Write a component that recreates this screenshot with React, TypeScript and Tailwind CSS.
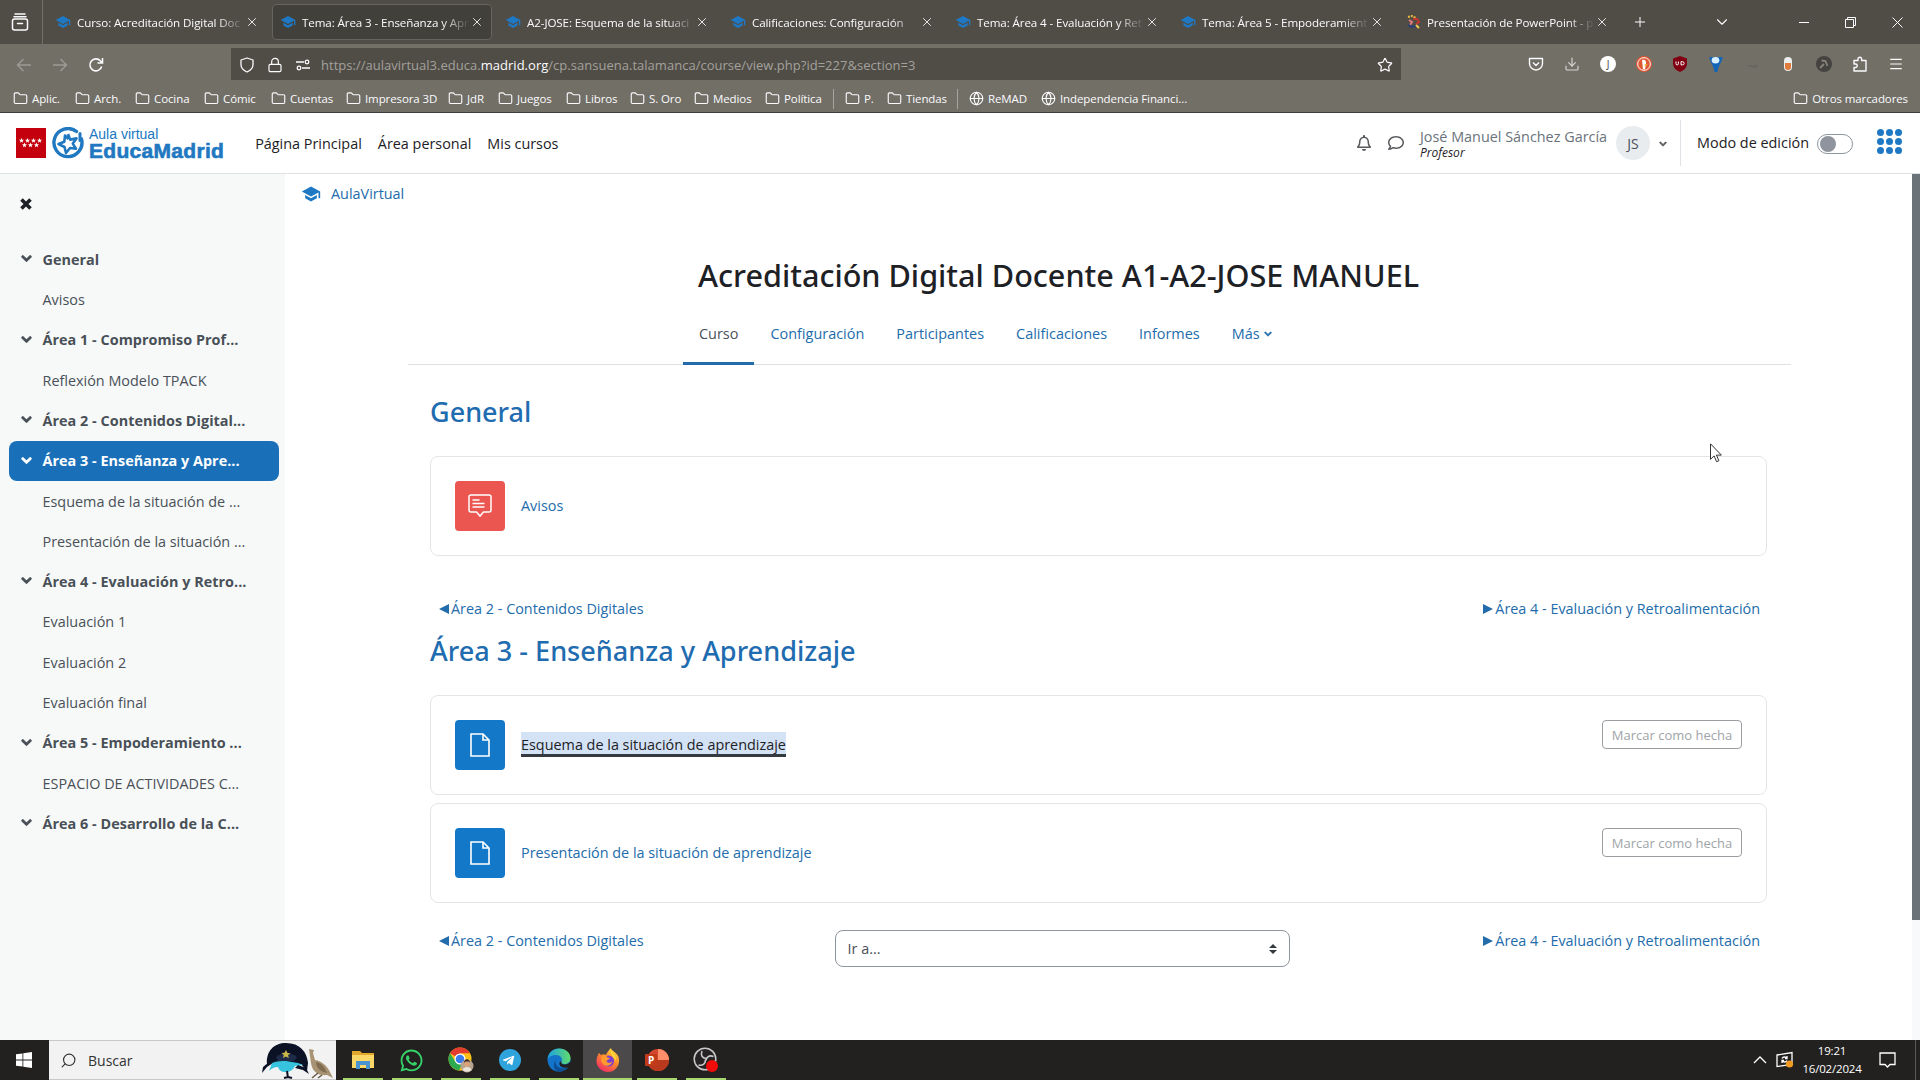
import { useState } from "react";
import { FaChevronDown, FaRegBell, FaRegComment, FaWhatsapp, FaTelegramPlane } from "react-icons/fa";
import { MdSchool } from "react-icons/md";
import { ChevronDown, Download, Folder, Globe, Lock, Menu, Plus, Search, Star, X } from "lucide-react";

const tabs = [
    { title: "Curso: Acreditación Digital Doc" },
    { title: "Tema: Área 3 - Enseñanza y Apr", active: true },
    { title: "A2-JOSE: Esquema de la situaci" },
    { title: "Calificaciones: Configuración" },
    { title: "Tema: Área 4 - Evaluación y Ret" },
    { title: "Tema: Área 5 - Empoderamient" },
    { title: "Presentación de PowerPoint - p", moodle: false },
];

const bookmarks: any[] = [
    { name: "Aplic.", width: "w-[62px]" },
    { name: "Arch.", width: "w-[60px]" },
    { name: "Cocina", width: "w-[69px]" },
    { name: "Cómic", width: "w-[67px]" },
    { name: "Cuentas", width: "w-[75px]" },
    { name: "Impresora 3D", width: "w-[102px]" },
    { name: "JdR", width: "w-[50px]" },
    { name: "Juegos", width: "w-[68px]" },
    { name: "Libros", width: "w-[64px]" },
    { name: "S. Oro", width: "w-[64px]" },
    { name: "Medios", width: "w-[71px]" },
    { name: "Política", width: "w-[68px]" },
    { name: "P.", width: "w-[42px]", divider: true },
    { name: "Tiendas", width: "w-[70px]" },
    { name: "ReMAD", width: "w-[72px]", divider: true, site: true },
    { name: "Independencia Financi...", width: "w-[160px]", site: true },
];

const courseIndex = [
    { name: "General", section: true },
    { name: "Avisos" },
    { name: "Área 1 - Compromiso Prof...", section: true },
    { name: "Reflexión Modelo TPACK" },
    { name: "Área 2 - Contenidos Digital...", section: true },
    { name: "Área 3 - Enseñanza y Apre...", section: true },
    { name: "Esquema de la situación de ..." },
    { name: "Presentación de la situación ..." },
    { name: "Área 4 - Evaluación y Retro...", section: true },
    { name: "Evaluación 1" },
    { name: "Evaluación 2" },
    { name: "Evaluación final" },
    { name: "Área 5 - Empoderamiento ...", section: true },
    { name: "ESPACIO DE ACTIVIDADES C..." },
    { name: "Área 6 - Desarrollo de la C...", section: true },
];

const courseTabs = ["Curso", "Configuración", "Participantes", "Calificaciones", "Informes"];

function TabBar() {
    return (
        <div className="flex h-11 shrink-0 items-center bg-[#504d47] text-[#fbfbfe]">
            <div className="flex h-full w-[43px] items-center justify-center border-r border-[#726f67] pr-0.5">
                <svg width="18" height="18" viewBox="0 0 18 18" fill="none" stroke="currentColor" strokeWidth="1.5">
                    <path d="M4 1h10M3 3.8h12" strokeLinecap="round" />
                    <rect x="1.5" y="6" width="15" height="11" rx="2" />
                    <path d="M6.5 10.5h5" strokeLinecap="round" />
                </svg>
            </div>
            <div className="ml-1 flex gap-[5px]">
                {tabs.map((tab, index) => (
                    <div
                        key={index}
                        className={
                            "flex h-9 w-[220px] items-center rounded border pl-[7px] " +
                            (tab.active ? "border-[#67645d] bg-[#42403a]" : "border-transparent")
                        }
                    >
                        {tab.moodle === false ? <PowerPointFavicon /> : <MdSchool className="size-4 shrink-0 text-[#1f78c4]" />}
                        <span className="ml-1.5 w-[168px] whitespace-nowrap pt-px text-[11.6px] tracking-[-0.1px] [mask-image:linear-gradient(to_right,black_140px,transparent_168px)]">
                            {tab.title}
                        </span>
                        <X className="size-3.5 shrink-0" strokeWidth={1.5} />
                    </div>
                ))}
            </div>
            <Plus className="ml-[15px] size-4" strokeWidth={1.5} />
            <ChevronDown className="ml-[65px] size-[18px]" strokeWidth={1.5} />
            <div className="ml-auto flex items-center gap-9 pr-[17px]">
                <svg width="10" height="10" stroke="currentColor"><path d="M0 5.5h10" /></svg>
                <svg width="11" height="11" fill="none" stroke="currentColor">
                    <path d="M.5 2.5h8v8h-8zM2.5 2.5v-2h8v8h-2" />
                </svg>
                <svg width="11" height="11" stroke="currentColor"><path d="M.5.5l10 10M10.5.5l-10 10" /></svg>
            </div>
        </div>
    );
}

function PowerPointFavicon() {
    return (
        <svg width="16" height="16" viewBox="0 0 16 16" fill="none" strokeWidth="2" className="shrink-0">
            <path d="M3 3l4-1 4 2" stroke="#e8b93b" strokeDasharray="2 1" />
            <path d="M8 5l4 0 2 3-3 2" stroke="#c4372e" />
            <path d="M4 6l3 2-2 3" stroke="#e37a7a" />
            <path d="M3 11l4 2 4-1" stroke="#2c3f78" />
            <path d="M11 11l3 3" stroke="#efc951" />
        </svg>
    );
}

function Toolbar() {
    return (
        <div className="flex h-10 shrink-0 items-center bg-[#726f67] text-[#fbfbfe]">
            <div className="flex w-[231px] gap-5 pl-4 pt-0.5">
                <svg width="16" height="16" viewBox="0 0 16 16" fill="none" stroke="#9d9b95" strokeWidth="1.4">
                    <path d="M15 8H1.5M7.5 2l-6 6 6 6" />
                </svg>
                <svg width="16" height="16" viewBox="0 0 16 16" fill="none" stroke="#9d9b95" strokeWidth="1.4">
                    <path d="M1 8h13.500M8.500 2l6 6-6 6" />
                </svg>
                <svg width="16" height="16" viewBox="0 0 16 16" fill="none" stroke="currentColor" strokeWidth="1.6">
                    <path d="M13.700 9.500A6 6 0 1 1 12.500 4L14 5.500M14.500 1v5h-5" />
                </svg>
            </div>
            <div className="flex h-8 w-[1170px] items-center bg-[#504d47] pl-2 pr-2 pt-0.5">
                <svg width="16" height="16" viewBox="0 0 16 16" fill="none" stroke="currentColor" strokeWidth="1.3">
                    <path d="M8 1L2 3v4.500c0 3.500 2.500 6 6 7.500 3.500-1.500 6-4 6-7.500V3z" strokeLinejoin="round" />
                </svg>
                <Lock className="ml-3 size-4" strokeWidth={1.8} />
                <svg className="ml-3" width="16" height="16" viewBox="0 0 16 16" fill="none" stroke="currentColor" strokeWidth="1.3">
                    <path d="M1 5h8M7 11h8" />
                    <circle cx="12" cy="5" r="1.800" />
                    <circle cx="4" cy="11" r="1.800" />
                </svg>
                <span className="ml-2.5 pt-px text-[13px] tracking-[0.02px] text-[#a3a19c]">
                    https://aulavirtual3.educa.<span className="text-[#fbfbfe]">madrid.org</span>
                    /cp.sansuena.talamanca/course/view.php?id=227&section=3
                </span>
                <Star className="ml-auto size-4" strokeWidth={1.8} />
            </div>
            <div className="ml-auto flex items-center gap-5 pr-4">
                <svg width="16" height="16" viewBox="0 0 16 16" fill="none" stroke="currentColor" strokeWidth="1.400">
                    <path d="M1.500 2.500h13v5a6.500 6.500 0 0 1-13 0zM5 6.500l3 3 3-3" strokeLinejoin="round" />
                </svg>
                <Download className="size-4 text-[#d4d3d0]" strokeWidth={1.8} />
                <div className="flex size-4 items-center justify-center rounded-full bg-white text-[10px] text-[#444]">J</div>
                <svg width="16" height="16" viewBox="0 0 16 16">
                    <circle cx="8" cy="8" r="8" fill="#de5833" />
                    <circle cx="8" cy="8" r="6.300" fill="none" stroke="#fff" />
                    <path d="M6 4c3-1 4.500 1 4 4l-1 5.500-2-.5z" fill="#fff" />
                    <path d="M8.500 8h3l-1 1.500h-2z" fill="#f5b82e" />
                </svg>
                <svg width="16" height="16" viewBox="0 0 16 16">
                    <path d="M8 0l7 2.500v5c0 4-3 7-7 8.500-4-1.500-7-4.500-7-8.500v-5z" fill="#800012" />
                    <path d="M4 5.500v2.200a1.200 1.200 0 0 0 2.400 0V5.500M9 5.700h1.500a1.600 1.600 0 0 1 0 3.200H9z" fill="none" stroke="#fff" />
                </svg>
                <svg width="16" height="16" viewBox="0 0 16 16">
                    <path d="M1.500 1h13c0 5-4.500 8-5 15h-3C6 9 1.500 6 1.500 1z" fill="#1266b8" />
                    <ellipse cx="7.500" cy="4.200" rx="3.800" ry="3.200" fill="#d8efff" />
                </svg>
                <svg width="16" height="16" viewBox="0 0 16 16"><path d="M2 9h4l3 1 5-2-2 4-6-1z" fill="#67655f" /></svg>
                <svg width="16" height="16" viewBox="0 0 16 16">
                    <rect x="4" y="1" width="8" height="14" rx="4" fill="#eee" />
                    <path d="M5 7h6v4a3 3 0 0 1-6 0z" fill="#e07b39" />
                </svg>
                <svg width="16" height="16" viewBox="0 0 16 16">
                    <circle cx="8" cy="8" r="8" fill="#45433f" />
                    <path d="M4 12l4-4M5.500 4.500l4 .5 2 5" fill="none" stroke="#85827b" strokeWidth="1.800" />
                </svg>
                <svg width="16" height="16" viewBox="0 0 16 16" fill="none" stroke="currentColor" strokeWidth="1.400">
                    <path d="M2 4.500h4V3a1.800 1.800 0 0 1 3.600 0v1.500H14V15H2v-3.500h1.500a1.700 1.700 0 0 0 0-3.500H2z" strokeLinejoin="round" />
                </svg>
                <Menu className="size-4" strokeWidth={1.8} />
            </div>
        </div>
    );
}

function BookmarkBar() {
    return (
        <div className="flex h-[29px] shrink-0 items-center border-b border-[#3f3d39] bg-[#726f67] pl-[13px] pt-px text-[11.5px] tracking-[-0.1px] text-[#fbfbfe]">
            {bookmarks.map((b, index) => (
                <div key={index} className="flex items-center">
                    {b.divider && <div className="mr-[11px] h-5 w-px bg-[#a6a49f]" />}
                    <div className={"flex shrink-0 items-center gap-1 whitespace-nowrap " + b.width}>
                        {b.site
                            ? <Globe className="size-[15px] shrink-0" strokeWidth={1.8} />
                            : <Folder className="size-[15px] shrink-0" strokeWidth={1.8} />}
                        {b.name}
                    </div>
                </div>
            ))}
            <div className="ml-auto flex items-center gap-1 pr-3">
                <Folder className="size-[15px]" strokeWidth={1.8} />
                Otros marcadores
            </div>
        </div>
    );
}

function Logo() {
    return (
        <div className="flex items-center">
            <svg width="30" height="30" viewBox="0 0 30 30" fill="#fff">
                <rect width="30" height="30" fill="#c4000f" />
                {[5.500, 11.500, 17.500, 23.500].map((x) => (
                    <path key={x} transform={`translate(${x} 12.500)`} d="M0-2.500l.7 1.700h1.800L1.100.4l.5 1.900L0 1.200l-1.600 1.100.5-1.900-1.400-1.200h1.800z" />
                ))}
                {[8.500, 14.500, 20.500].map((x) => (
                    <path key={x} transform={`translate(${x} 17)`} d="M0-2.500l.7 1.700h1.800L1.100.4l.5 1.900L0 1.200l-1.600 1.100.5-1.900-1.400-1.200h1.800z" />
                ))}
            </svg>
            <svg className="ml-1.5" width="32" height="32" viewBox="0 0 32 32" fill="none" stroke="#2078c1">
                <path d="M24.500 4.500A14 14 0 1 0 29.500 12" strokeWidth="3.400" strokeLinecap="round" />
                <path d="M16 7l2.200 5.600 6.300-1.200-3.700 5.200 3.200 5-6-.6L14 26l-1.500-6L6.500 17l5.800-2.300L13 8.500l3.500 3.500" strokeWidth="2.600" strokeLinejoin="round" />
                <path d="M28 6.500v7" strokeWidth="3" strokeLinecap="round" />
            </svg>
            <div className="ml-[5px] flex flex-col font-[Liberation_Sans,Arial,sans-serif] text-[#2078c1]">
                <span className="text-[14px] leading-[14px]">Aula virtual</span>
                <span className="text-[21px] font-bold leading-[19px] tracking-[0.3px] [-webkit-text-stroke:0.6px_#2078c1]">EducaMadrid</span>
            </div>
        </div>
    );
}

function SiteHeader() {
    const [editing, setEditing] = useState(false);

    return (
        <header className="flex h-[61px] shrink-0 items-center border-b border-[#dee2e6] bg-white pl-4 text-[14.4px] text-[#1d2125]">
            <Logo />
            <nav className="ml-[31px] flex gap-4 pt-0.5">
                <a>Página Principal</a>
                <a>Área personal</a>
                <a>Mis cursos</a>
            </nav>
            <div className="ml-auto flex items-center">
                <FaRegBell className="size-4 text-[#56595c]" />
                <FaRegComment className="ml-4 size-4 text-[#56595c]" />
                <div className="ml-4 flex flex-col pt-0.5">
                    <span className="leading-[18px] text-[#6a737b]">José Manuel Sánchez García</span>
                    <span className="text-xs italic leading-[14px]">Profesor</span>
                </div>
                <div className="ml-[9px] flex size-[34px] items-center justify-center rounded-full bg-[#e9ecef] pt-px text-sm text-[#495057]">JS</div>
                <FaChevronDown className="ml-[9px] mt-0.5 size-2 text-[#56595c] [stroke-width:50]" />
                <div className="ml-[13px] h-[46px] w-px bg-[#dee2e6]" />
                <span className="ml-4">Modo de edición</span>
                <button
                    onClick={() => setEditing(!editing)}
                    className={"ml-2 mt-px flex h-5 w-9 items-center rounded-full border border-[#8f959e] px-0.5 " + (editing ? "justify-end" : "")}
                >
                    <span className="size-4 rounded-full bg-[#8f959e]" />
                </button>
                <div className="ml-6 mr-[18px] mb-1 grid grid-cols-3 gap-[2px]">
                    {Array.from({ length: 9 }).map((_, i) => (
                        <span key={i} className="size-[7px] rounded-full bg-[#1f78c4]" />
                    ))}
                </div>
            </div>
        </header>
    );
}

function Sidebar() {
    const [current, setCurrent] = useState(5);

    return (
        <aside className="w-[285px] shrink-0 bg-[#f7f9f9] pt-5 text-[#495057]">
            <svg className="ml-5 mt-1" width="12" height="12" viewBox="0 0 12 12" stroke="#1d2125" strokeWidth="3.600">
                <path d="M1.500 1.500l9 9M10.500 1.500l-9 9" />
            </svg>
            <div className="ml-[9px] mt-[29.4px] w-[270px]">
                {courseIndex.map((item, index) => (
                    <div
                        key={index}
                        onClick={() => setCurrent(index)}
                        className={
                            "flex h-[40.3px] items-center whitespace-nowrap rounded-lg text-[14.4px] " +
                            (index === current ? "bg-[#1a70b8] text-white " : "") +
                            (item.section ? "font-bold tracking-[0.03px]" : "")
                        }
                    >
                        <span className="w-[33.5px] pl-3">
                            {item.section && <FaChevronDown className="mb-0.5 size-[11px] [stroke-width:50]" />}
                        </span>
                        {item.name}
                    </div>
                ))}
            </div>
        </aside>
    );
}

function SectionLinks({ children }: any) {
    return (
        <div className="flex items-start justify-between pl-[9px] pr-[7px] text-[14.4px] leading-[22px] text-[#226cab]">
            <a className="flex w-[300px] items-center gap-0.5">
                <svg width="10" height="10" fill="currentColor"><path d="M10 0v10L0 5z" /></svg>
                Área 2 - Contenidos Digitales
            </a>
            {children}
            <a className="flex w-[300px] items-center justify-end gap-0.5">
                <svg width="10" height="10" fill="currentColor"><path d="M0 0v10l10-5z" /></svg>
                Área 4 - Evaluación y Retroalimentación
            </a>
        </div>
    );
}

function ActivityCard({ name, forum, focused, completion }: any) {
    const [done, setDone] = useState(false);

    return (
        <div className="flex h-[100px] items-start rounded-lg border border-[#e3e6e9] px-6 pt-6 text-[14.4px]">
            <div className={"flex size-[50px] items-center justify-center rounded " + (forum ? "bg-[#eb5651]" : "bg-[#1478c8]")}>
                {forum ? (
                    <svg width="24" height="24" viewBox="0 0 24 24" fill="none" stroke="#fff" strokeWidth="1.500">
                        <path d="M3 1h18a2 2 0 0 1 2 2v13a2 2 0 0 1-2 2h-5.500L12 22l-3.500-4H3a2 2 0 0 1-2-2V3a2 2 0 0 1 2-2z" />
                        <path d="M4.500 6h7M4.500 9.500h12M4.500 13h12" />
                    </svg>
                ) : (
                    <svg width="20" height="24" viewBox="0 0 20 24" fill="none" stroke="#fff" strokeWidth="1.600">
                        <path d="M1 1h12l6 6v16H1zM13 1v6h6" />
                    </svg>
                )}
            </div>
            <div className="ml-4 flex h-[50px] items-center">
                {focused
                    ? <a className="mb-px h-[25px] bg-[#d3e3f5] leading-[25px] text-[#1d2125] shadow-[inset_0_-3px_0_#343a40]">{name}</a>
                    : <a className="text-[#226cab]">{name}</a>}
            </div>
            {completion && (
                <button
                    onClick={() => setDone(!done)}
                    className="ml-auto h-[29px] w-[140px] rounded border border-[#999da1] pt-0.5 text-[13px] text-[#a0a4a8]"
                >
                    Marcar como hecha
                </button>
            )}
        </div>
    );
}

function CoursePage() {
    return (
        <main className="flex-1 bg-white">
            <div className="flex h-10 items-center gap-2.5 pl-4 text-[14.4px] text-[#226cab]">
                <MdSchool className="size-5 text-[#1f78c4]" />
                AulaVirtual
            </div>
            <h1 className="ml-[413px] mt-[38px] font-[Noto_Sans,sans-serif] text-[30.6px] font-medium leading-[46px] text-[#1d2125]">
                Acreditación Digital Docente A1-A2-JOSE MANUEL
            </h1>
            <div className="ml-[123px] mt-[11px] flex h-[56px] w-[1383px] border-b border-[#dee2e6] pl-[275px] text-[14.45px] text-[#226cab]">
                {courseTabs.map((tab) => (
                    <a
                        key={tab}
                        className={
                            "-mb-px h-[56px] border-b-[3px] px-4 pt-[14px] " +
                            (tab === "Curso" ? "border-[#226cab] text-[#495057]" : "border-transparent")
                        }
                    >
                        {tab}
                    </a>
                ))}
                <a className="flex h-[50px] items-center gap-1 px-4">
                    Más <FaChevronDown className="size-2 [stroke-width:50]" />
                </a>
            </div>
            <div className="ml-[145px] mt-[29px] flex w-[1337px] flex-col">
                <h2 className="font-[Noto_Sans,sans-serif] text-[27px] font-medium leading-9 text-[#1f6cb0]">General</h2>
                <div className="mt-[26px]">
                    <ActivityCard name="Avisos" forum />
                </div>
                <div className="mt-[42px]">
                    <SectionLinks />
                </div>
                <h2 className="mt-[13px] font-[Noto_Sans,sans-serif] text-[27.1px] font-medium leading-9 text-[#1f6cb0]">
                    Área 3 - Enseñanza y Aprendizaje
                </h2>
                <div className="mt-[26px] flex flex-col gap-2">
                    <ActivityCard name="Esquema de la situación de aprendizaje" focused completion />
                    <ActivityCard name="Presentación de la situación de aprendizaje" completion />
                </div>
                <div className="mt-[27px]">
                    <SectionLinks>
                        <div className="-ml-[75px] flex h-[37px] w-[455px] items-center justify-between rounded-lg border border-[#8f959e] pl-3 pr-3 text-[#495057]">
                            Ir a...
                            <svg width="8" height="10" viewBox="0 0 8 10" fill="#343a40"><path d="M4 0l4 4H0zM4 10L0 6h8z" /></svg>
                        </div>
                    </SectionLinks>
                </div>
            </div>
        </main>
    );
}

function MousePointer() {
    return (
        <svg className="absolute left-[1710px] top-[443px]" width="13" height="20" viewBox="0 0 13 20" fill="#fff" stroke="#333">
            <path d="M.5.8v15.500l3.600-3.400 2.500 5.800 2.300-1-2.500-5.600h5z" />
        </svg>
    );
}

function SearchBirds() {
    return (
        <svg className="ml-auto" width="74" height="38" viewBox="0 0 74 38">
            <path d="M7 23C6 10 14 2 26 2c14 0 21 9 22 20l-1 8-6-7H14z" fill="#0b1226" />
            <path d="M13 22l-6 4-5 6 1-6 6-5z" fill="#0b1226" />
            <path d="M12 22c5-2 10-2 14-2l12 2 5 2-8 1c-2 4-5 6-9 6-5 0-7-2-8-5-4 0-7 2-9 4z" fill="#37c3dd" />
            <path d="M16 16c6-5 15-5 21 0l-3 4H18z" fill="#1e2b49" />
            <path d="M26 9l1.500 3 3 .3-2.500 2 .8 3L26 15.500 23 17l.8-3-2.300-2 3-.3z" fill="#c9b84a" />
            <path d="M38 24l8 3 3 6-6-4-8-2z" fill="#0b1226" />
            <path d="M27 30l1 7M28 36l-4 1M28 36l4 1" stroke="#0b1226" strokeWidth="2" />
            <path d="M49 8l5 1-1 3 2 7c7 1 12 6 15 12l3 6-6-3c-8 1-15-3-16-12z" fill="#a89474" />
            <path d="M56 21c6 1 9 6 11 11-6-1-11-5-11-11z" fill="#806c50" />
            <path d="M58 32l-6 5M62 34l-4 3" stroke="#6a5a45" strokeWidth="1.500" />
        </svg>
    );
}

function TaskbarIcon({ name }: any) {
    if (name === "explorer") {
        return (
            <svg width="22" height="20" viewBox="0 0 22 20">
                <path d="M0 1h8l2 2h12v4H0z" fill="#e0a92e" />
                <path d="M0 5h22v13H0z" fill="#fbd767" />
                <path d="M4 11h14v8h-4v-4H8v4H4z" fill="#4a93d1" />
            </svg>
        );
    }
    if (name === "whatsapp") {
        return <FaWhatsapp className="size-[25px] text-[#35d26a]" />;
    }
    if (name === "chrome") {
        return (
            <svg width="26" height="26" viewBox="0 0 26 26">
                <circle cx="12" cy="12" r="11.500" fill="#fbc116" />
                <path d="M12 12L2 6.300A11.500 11.500 0 0 1 22 6.300H12z" fill="#e33b2e" />
                <path d="M2 6.300A11.500 11.500 0 0 0 11 23.500l4-8L7 14z" fill="#2da94f" />
                <circle cx="12" cy="12" r="5.500" fill="#fff" />
                <circle cx="12" cy="12" r="4.300" fill="#3b7ded" />
                <circle cx="19" cy="19" r="6.500" fill="#b7a58f" />
                <circle cx="19" cy="17" r="3" fill="#d9a27d" />
                <path d="M16 16c0-5 6-5 6 0l-1-1.500h-3.500z" fill="#3c2a20" />
                <path d="M14.500 23c1-4 8-4 9 0a6.500 6.500 0 0 1-9 0z" fill="#e8e4dc" />
            </svg>
        );
    }
    if (name === "telegram") {
        return (
            <div className="flex size-[22px] items-center justify-center rounded-full bg-[#2fa3dc]">
                <FaTelegramPlane className="mr-0.5 size-[13px] text-white" />
            </div>
        );
    }
    if (name === "edge") {
        return (
            <svg width="24" height="24" viewBox="0 0 24 24">
                <defs>
                    <linearGradient id="edgeTop" x1="0" x2="1">
                        <stop stopColor="#1fa2e0" />
                        <stop offset="1" stopColor="#5fdc6c" />
                    </linearGradient>
                </defs>
                <circle cx="12" cy="12" r="11.500" fill="#1474c9" />
                <path d="M.6 11C1.500 4 6.500.5 12 .5c7 0 11.500 4.500 11.500 9.500 0 4-3 6-6 6-2.500 0-4-1-3-2.500C16 10 13 7 9.500 7 5 7 1.500 9 .6 11z" fill="url(#edgeTop)" />
                <path d="M9 11c-2 4 1 10 8 9.500 2 0 4-1 5-2-2 3.500-6 5-10 5C7 23 5 17 9 11z" fill="#0c4f94" />
                <path d="M14.500 13.500C13.500 15 15 16.500 18 16.500c2 0 4-1 5-2.500l1 4-3 1.500c-6 1.500-10-2-8-6z" fill="#211f1f" />
            </svg>
        );
    }
    if (name === "firefox") {
        return (
            <svg width="24" height="24" viewBox="0 0 24 24">
                <defs>
                    <linearGradient id="fox" x1="0.800" y1="0" x2="0.200" y2="1">
                        <stop stopColor="#ffdf3e" />
                        <stop offset="0.450" stopColor="#ff8a2a" />
                        <stop offset="1" stopColor="#f0246c" />
                    </linearGradient>
                </defs>
                <path d="M3 5c1 1 1 1 2 2 2-1 4-1 5 0 1-3 3-5 5-7 0 3 6 4 7.500 9C25 17 19 24 12 24S0 18.500.5 12.500C.7 9 2 7 3 5z" fill="url(#fox)" />
                <circle cx="12.500" cy="13" r="5.500" fill="#7a3fd0" />
                <path d="M6 8c3-1 5 0 5.500 1.500L14 10c-1 2-3 1.500-3.500 3 1 2.500 4 2 6 .5-1 4-6 5.500-9 3-2.500-2-3-5.500-1.500-8.500z" fill="#ff9a2e" />
                <path d="M15 1c0 4 6 5 5 12-1-2-2-3-3-3.500 0-3-4-4-2-8.500z" fill="#ffd83a" />
            </svg>
        );
    }
    if (name === "powerpoint") {
        return (
            <svg width="26" height="24" viewBox="0 0 26 24">
                <circle cx="14" cy="12" r="11" fill="#d2472d" />
                <path d="M14 1a11 11 0 0 1 11 11H14z" fill="#ff8f6b" />
                <path d="M3 12h22a11 11 0 0 1-22 0z" fill="#b9391f" />
                <rect x="1" y="6" width="12" height="12" rx="1" fill="#c13b1b" />
                <text x="4" y="16" fontSize="10" fontWeight="700" fill="#fff">P</text>
            </svg>
        );
    }
    return (
        <svg width="26" height="26" viewBox="0 0 26 26">
            <circle cx="12" cy="12" r="10.800" fill="#252324" stroke="#c9c9c9" strokeWidth="1.500" />
            <g fill="none" stroke="#c9c9c9" strokeWidth="1.600">
                <path d="M9 4c-1.500 4 0 7 4 7.500" />
                <path d="M20.500 9.500c-4-1.500-7 0-7.500 4" />
                <path d="M5.500 18c4 1 7-1 7-5.500" />
            </g>
            <circle cx="19" cy="19" r="6" fill="#f10b0b" />
        </svg>
    );
}

const apps = ["explorer", "whatsapp", "chrome", "telegram", "edge", "firefox", "powerpoint", "obs"];

function Taskbar() {
    return (
        <footer className="flex h-10 shrink-0 items-stretch bg-[#232120] text-white">
            <div className="flex w-[49px] items-center justify-center pr-0.5">
                <svg width="16" height="16" viewBox="0 0 16 16" fill="#fff">
                    <path d="M0 2.300L6.500 1.400v6.200H0zM7.300 1.300L16 0v7.600H7.300zM0 8.400h6.500v6.200L0 13.700zM7.300 8.400H16V16l-8.700-1.300z" />
                </svg>
            </div>
            <div className="flex w-[287px] items-center border-y border-[#c8c8c8] bg-[#f2f2f2] pl-[11px] pr-0.5 text-[#333]">
                <Search className="size-[17px] -scale-x-100" strokeWidth={1.6} />
                <span className="ml-[11px] text-[14px]">Buscar</span>
                <SearchBirds />
            </div>
            <div className="flex pl-0.5">
                {apps.map((app) => (
                    <div
                        key={app}
                        className={"flex w-[49px] flex-col items-center " + (app === "firefox" ? "bg-[#4b4949]" : "")}
                    >
                        <div className="flex flex-1 items-center pt-0.5">
                            <TaskbarIcon name={app} />
                        </div>
                        <div className={"h-0.5 bg-[#a8d970] " + (app === "firefox" ? "w-full" : "w-10")} />
                    </div>
                ))}
            </div>
            <div className="ml-auto flex items-center">
                <svg width="14" height="8" fill="none" stroke="#fff" strokeWidth="1.300"><path d="M1 7l6-6 6 6" /></svg>
                <svg className="ml-[9px]" width="18" height="18" viewBox="0 0 18 18" fill="none" stroke="#fff" strokeWidth="1.300">
                    <path d="M1 4l15-2.500v12L1 15.500z" />
                    <path d="M6 7.500c1-2 4-2 5 0M11 9.500c-1 2-4 2-5 0M11 5v2.500H9M6 12V9.500h2" />
                    <circle cx="13.500" cy="13" r="3.600" fill="#f09a1f" stroke="none" />
                </svg>
                <div className="ml-2 flex w-[60px] flex-col items-center text-[11.5px] leading-[18px] tracking-[-0.2px]">
                    <span>19:21</span>
                    <span>16/02/2024</span>
                </div>
                <svg className="ml-[17px]" width="17" height="17" viewBox="0 0 17 17" fill="none" stroke="#fff" strokeWidth="1.300">
                    <path d="M1 1h15v11.500h-5L8.500 15 6 12.500H1z" />
                </svg>
                <div className="ml-[19px] mr-1 h-10 w-px bg-[#5b5958]" />
            </div>
        </footer>
    );
}

export default function App() {
    return (
        <div className="relative flex h-[1080px] w-[1920px] flex-col overflow-hidden bg-white font-[Open_Sans,Noto_Sans,sans-serif]">
            <TabBar />
            <Toolbar />
            <BookmarkBar />
            <SiteHeader />
            <div className="flex flex-1 overflow-hidden">
                <Sidebar />
                <CoursePage />
                <div className="w-2 shrink-0 bg-[#f8f9fa]">
                    <div className="h-[746px] bg-[#6b7378]" />
                </div>
            </div>
            <Taskbar />
            <MousePointer />
        </div>
    );
}
